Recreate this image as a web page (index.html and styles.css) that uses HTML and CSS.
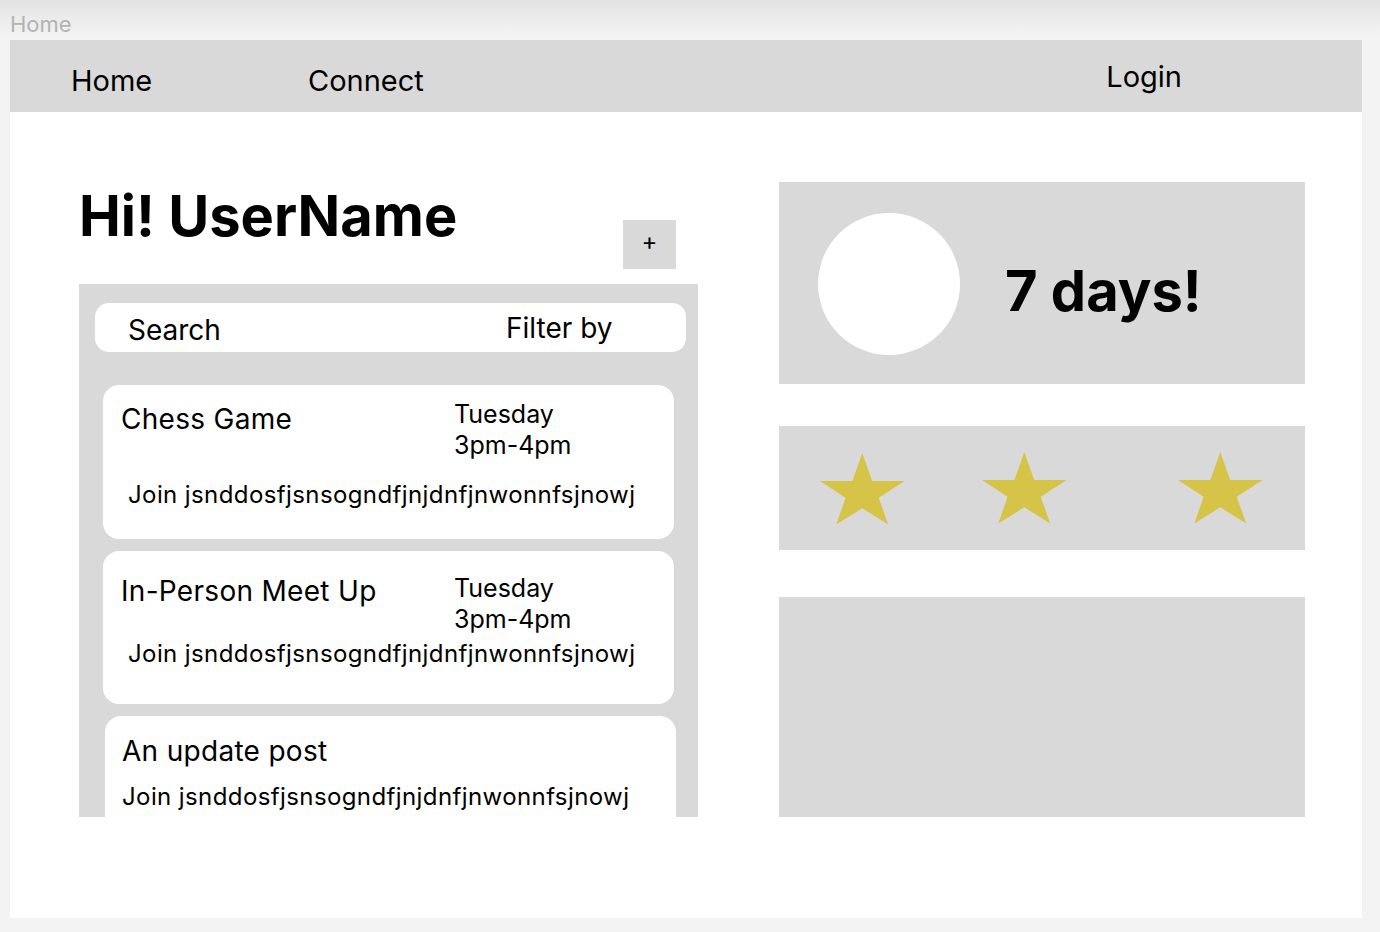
FILE: index.html
```html
<!DOCTYPE html>
<html lang="en">
<head>
<meta charset="utf-8">
<title>Home</title>
<link rel="stylesheet" href="styles.css">
</head>
<body>
<div class="frame-label">Home</div>
<div class="frame">
  <nav class="nav">
    <span class="nav-link nav-home">Home</span>
    <span class="nav-link nav-connect">Connect</span>
    <span class="nav-link nav-login">Login</span>
  </nav>
  <main class="main">
    <section class="left">
      <div class="head">
        <h1 class="title">Hi! UserName</h1>
        <div class="plus">+</div>
      </div>
      <div class="panel">
        <div class="search">
          <span class="search-text">Search</span>
          <span class="filter-text">Filter by</span>
        </div>
        <div class="card card-1">
          <div class="card-head">
            <div class="card-title">Chess Game</div>
            <div class="card-date">Tuesday<br>3pm-4pm</div>
          </div>
          <div class="join">Join jsnddosfjsnsogndfjnjdnfjnwonnfsjnowj</div>
        </div>
        <div class="card card-2">
          <div class="card-head">
            <div class="card-title">In-Person Meet Up</div>
            <div class="card-date">Tuesday<br>3pm-4pm</div>
          </div>
          <div class="join">Join jsnddosfjsnsogndfjnjdnfjnwonnfsjnowj</div>
        </div>
        <div class="card card-3">
          <div class="card-head">
            <div class="card-title">An update post</div>
          </div>
          <div class="join">Join jsnddosfjsnsogndfjnjdnfjnwonnfsjnowj</div>
        </div>
      </div>
    </section>
    <section class="right">
      <div class="box streak">
        <div class="avatar"></div>
        <div class="streak-text">7 days!</div>
      </div>
      <div class="box stars">
        <svg class="star star-1" viewBox="0 0 85 72" width="85" height="72"><polygon points="42.3,0 52.2,28 84.6,28 58.7,44.8 68.2,71.6 42.3,55.3 16.3,71.6 25.6,44.8 0,28 32.4,28"/></svg>
        <svg class="star star-2" viewBox="0 0 85 72" width="85" height="72"><polygon points="42.3,0 52.2,28 84.6,28 58.7,44.8 68.2,71.6 42.3,55.3 16.3,71.6 25.6,44.8 0,28 32.4,28"/></svg>
        <svg class="star star-3" viewBox="0 0 85 72" width="85" height="72"><polygon points="42.3,0 52.2,28 84.6,28 58.7,44.8 68.2,71.6 42.3,55.3 16.3,71.6 25.6,44.8 0,28 32.4,28"/></svg>
      </div>
      <div class="box empty"></div>
    </section>
  </main>
</div>
</body>
</html>
```

FILE: styles.css
```css
* { box-sizing: border-box; }

html, body {
  margin: 0;
  padding: 0;
}

body {
  width: 1380px;
  height: 932px;
  overflow: hidden;
  font-family: Inter, "Noto Sans", sans-serif;
  color: #000;
  background: linear-gradient(to bottom, #e3e3e3 0px, #f3f3f3 36px, #f3f3f3 100%);
}

.frame-label {
  height: 40px;
  padding: 11px 0 0 10px;
  font-size: 22px;
  line-height: 26px;
  color: #b3b3b3;
}

.frame {
  margin-left: 10px;
  width: 1352px;
  height: 878px;
  background: #fff;
  overflow: hidden;
}

.nav {
  height: 72px;
  background: #d9d9d9;
  display: flex;
  align-items: flex-start;
  padding-left: 61px;
}

.nav-link {
  font-size: 29px;
  line-height: 32px;
  padding-top: 25px;
}

.nav-home { width: 237px; }

.nav-login {
  margin-left: auto;
  margin-right: 180px;
  padding-top: 21px;
}

.main {
  display: flex;
  gap: 81px;
  padding: 70px 0 0 69px;
}

.left { width: 619px; }

.head {
  height: 102px;
  display: flex;
  justify-content: space-between;
  align-items: flex-start;
  padding-right: 22px;
}

.title {
  margin: 0;
  font-size: 56px;
  font-weight: 700;
  line-height: 70px;
  margin-top: -1px;
}

.plus {
  width: 53px;
  height: 49px;
  margin-top: 38px;
  background: #d9d9d9;
  display: flex;
  align-items: center;
  justify-content: center;
  font-size: 24px;
  line-height: 1;
  padding-bottom: 5px;
}

.panel {
  height: 533px;
  background: #d9d9d9;
  overflow: hidden;
  padding: 19px 12px 0 16px;
}

.search {
  height: 49px;
  background: #fff;
  border-radius: 14px;
  display: flex;
  align-items: flex-start;
  font-size: 28px;
  line-height: 32px;
  margin-bottom: 33px;
}

.search-text {
  width: 411px;
  padding-left: 33px;
  padding-top: 11px;
}

.filter-text {
  padding-top: 9px;
}

.card {
  width: 571px;
  margin-left: 8px;
  background: #fff;
  border-radius: 16px;
  padding-left: 18px;
  margin-bottom: 12px;
}

.card-head {
  display: flex;
  align-items: flex-start;
}

.card-title {
  width: 333px;
  font-size: 28px;
  line-height: 30px;
  letter-spacing: 0.3px;
}

.card-date {
  font-size: 25px;
  line-height: 31px;
}

.join {
  font-size: 24px;
  line-height: 28px;
  letter-spacing: 0.4px;
  margin-left: 7px;
  white-space: nowrap;
}

.card-1 { height: 154px; padding-top: 14px; }
.card-1 .card-title { margin-top: 5px; }
.card-1 .join { margin-top: 20px; }

.card-2 { height: 153px; padding-top: 22px; }
.card-2 .card-title { margin-top: 3px; }
.card-2 .join { margin-top: 5px; }

.card-3 { height: 140px; padding-top: 20px; padding-left: 17px; margin-left: 10px; }
.card-3 .join { margin-top: 17px; margin-left: 0; }

.right {
  width: 526px;
  display: flex;
  flex-direction: column;
}

.box { background: #d9d9d9; }

.streak {
  height: 202px;
  display: flex;
  align-items: flex-start;
  padding-left: 39px;
}

.avatar {
  width: 142px;
  height: 142px;
  border-radius: 50%;
  background: #fff;
  margin-top: 31px;
}

.streak-text {
  font-size: 56px;
  font-weight: 700;
  line-height: 70px;
  margin-top: 74px;
  margin-left: 45px;
}

.stars {
  height: 124px;
  margin-top: 42px;
  display: flex;
  align-items: flex-start;
  padding-left: 41px;
  padding-top: 26px;
}

.star { display: block; fill: #d5c448; }
.star-1 { margin-top: 1px; }
.star-2 { margin-left: 77px; }
.star-3 { margin-left: 111px; }

.empty {
  height: 220px;
  margin-top: 47px;
}
```
